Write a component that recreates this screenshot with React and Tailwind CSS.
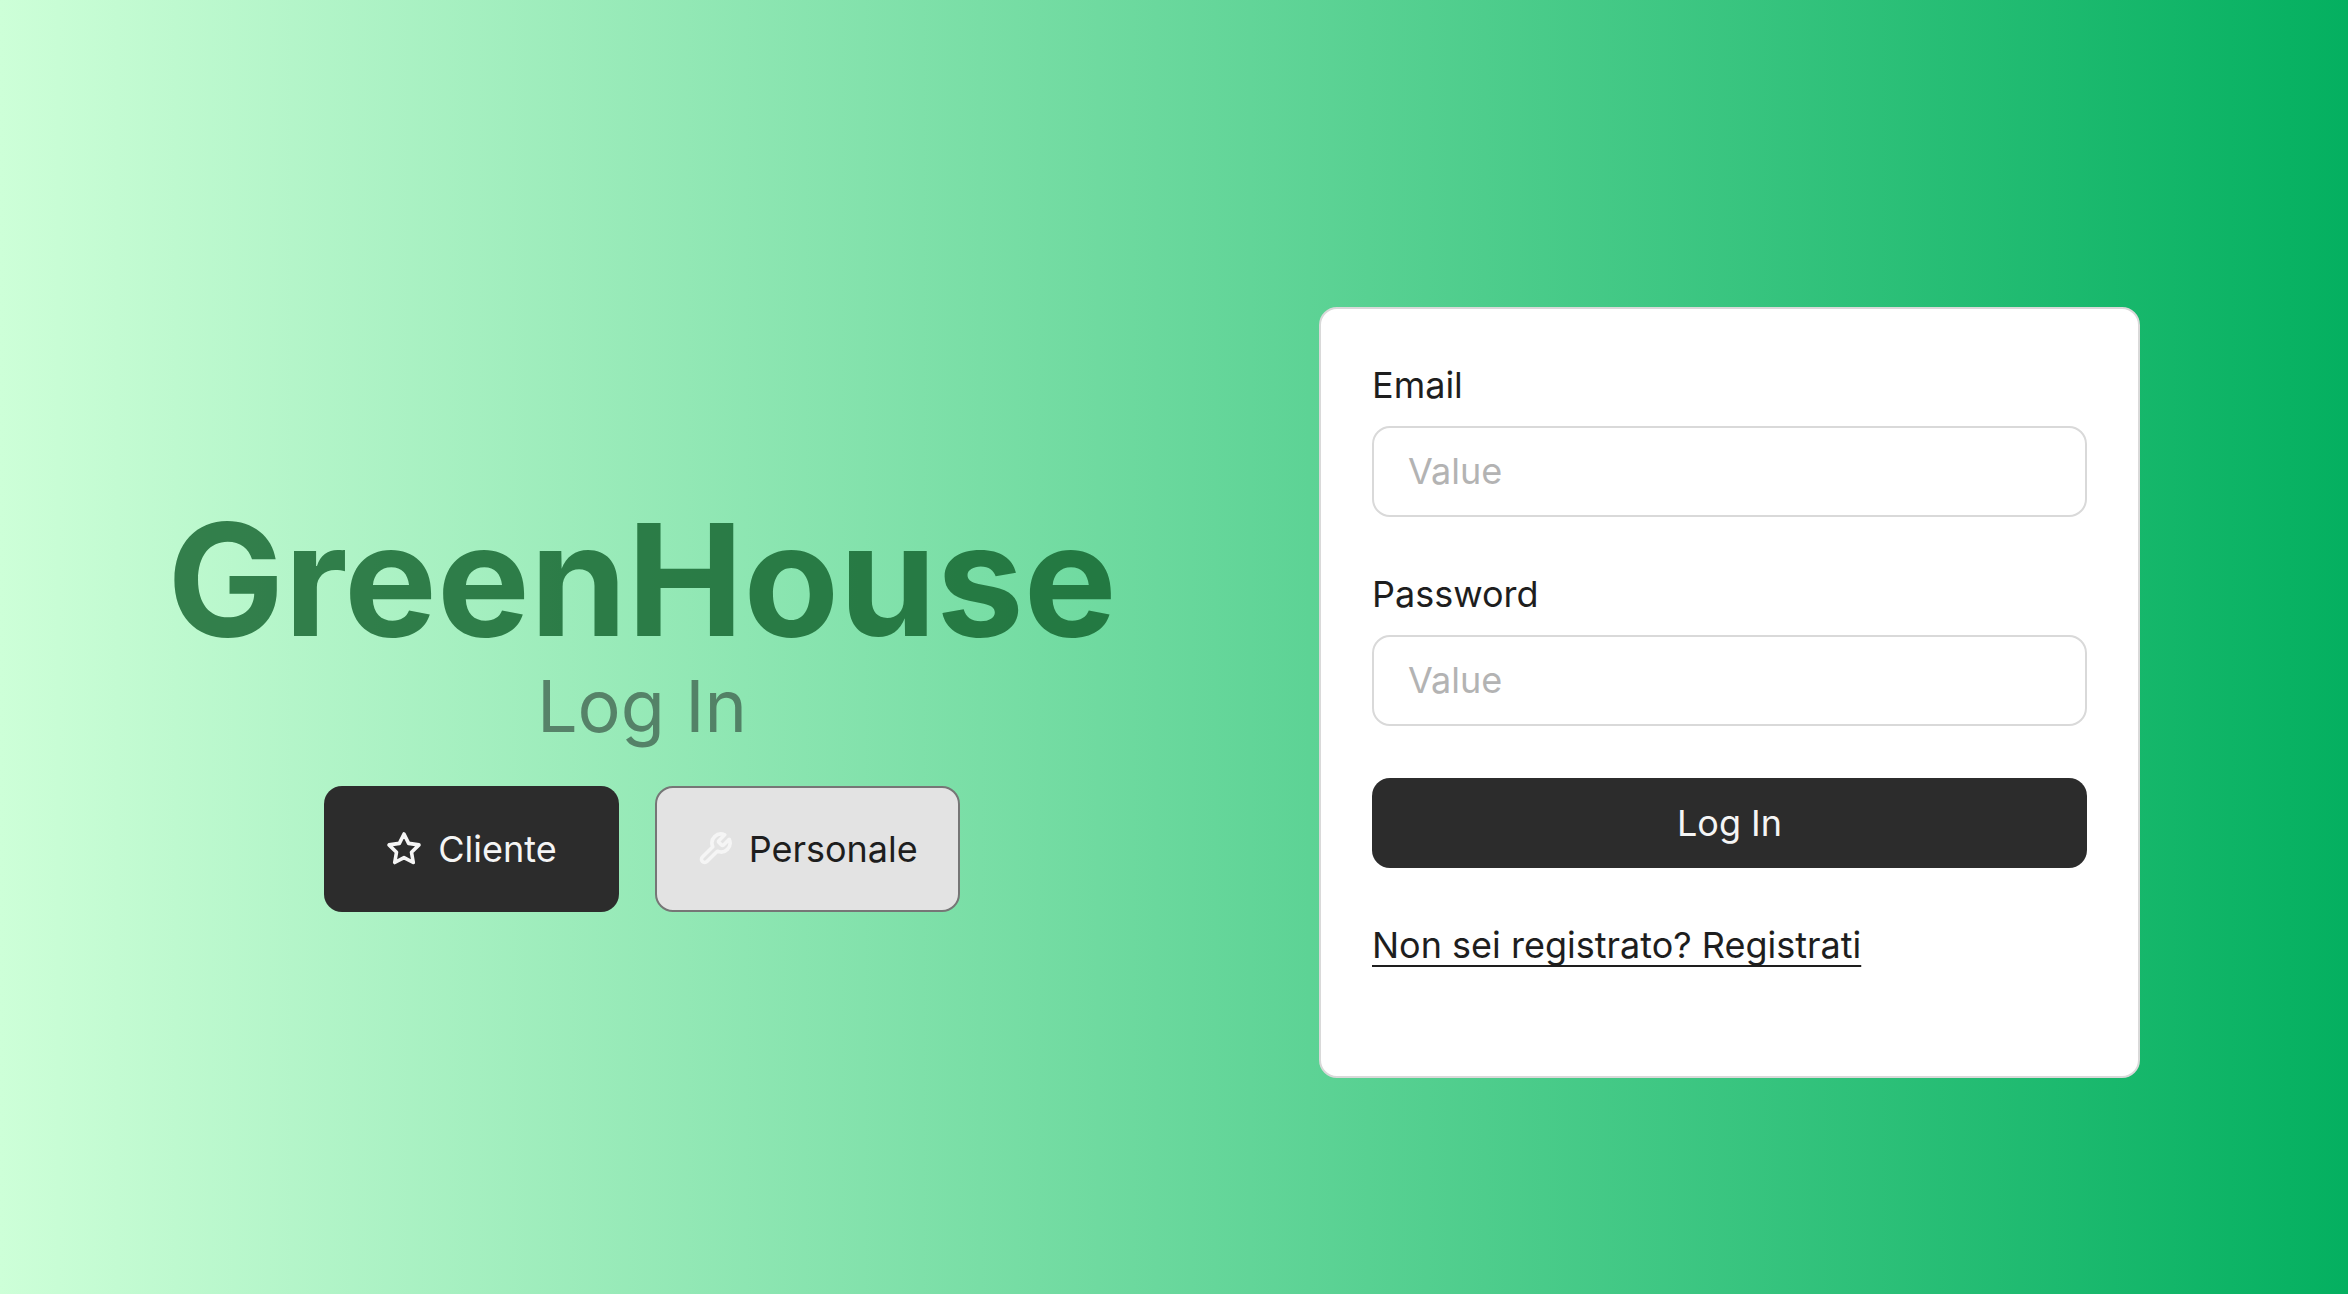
import React from "react";
import { FiStar, FiTool } from "react-icons/fi";

function Field({ id, label, type }) {
  return (
    <div className="flex flex-col gap-4">
      <label htmlFor={id} className="leading-[50px]">
        {label}
      </label>
      <input
        id={id}
        type={type}
        placeholder="Value"
        className="h-[91px] w-full rounded-[18px] border-2 border-[#d9d9d9] bg-white px-[34px] placeholder:text-[#b3b3b3] placeholder:opacity-100"
      />
    </div>
  );
}

export default function App() {
  return (
    <main className="grid min-h-screen grid-cols-[1284fr_1064fr] items-center bg-linear-to-r/srgb from-[#cdffd8] to-[#04b060] pt-[90px] font-['Inter',sans-serif] text-[36px] text-[#1e1e1e]">
      <section className="mt-7 flex flex-col items-center">
        <h1 className="text-[156px] leading-[160px] font-bold text-[#10602a]/80">GreenHouse</h1>
        <p className="mt-2 text-[72px] leading-[76px] text-[#395646]/70">Log In</p>
        <div className="mt-[42px] flex gap-9">
          <button
            type="button"
            className="flex items-center gap-4 rounded-[18px] bg-[#2c2c2c] px-[62px] py-[38px] leading-[50px] text-[#f5f5f5]"
          >
            <FiStar className="size-9 [stroke-width:2.4]" />
            Cliente
          </button>
          <button
            type="button"
            className="flex items-center gap-4 rounded-[18px] border-2 border-[#767676] bg-[#e3e3e3] px-10 py-9 leading-[50px]"
          >
            <FiTool className="size-9 text-[#f5f5f5] [stroke-width:2.4]" />
            Personale
          </button>
        </div>
      </section>

      <section className="pl-[35px]">
        <form className="flex w-full max-w-[821px] flex-col gap-[52px] rounded-[18px] border-2 border-[#d9d9d9] bg-white px-[51px] pt-[51px] pb-[106px]">
          <Field id="email" label="Email" type="email" />
          <Field id="password" label="Password" type="password" />
          <button type="button" className="h-[90px] rounded-[18px] bg-[#2c2c2c] text-[#f5f5f5]">
            Log In
          </button>
          <a
            href="#registrati"
            className="self-start leading-[50px] underline decoration-2 underline-offset-[7px] [text-decoration-skip-ink:none]"
          >
            Non sei registrato? Registrati
          </a>
        </form>
      </section>
    </main>
  );
}
